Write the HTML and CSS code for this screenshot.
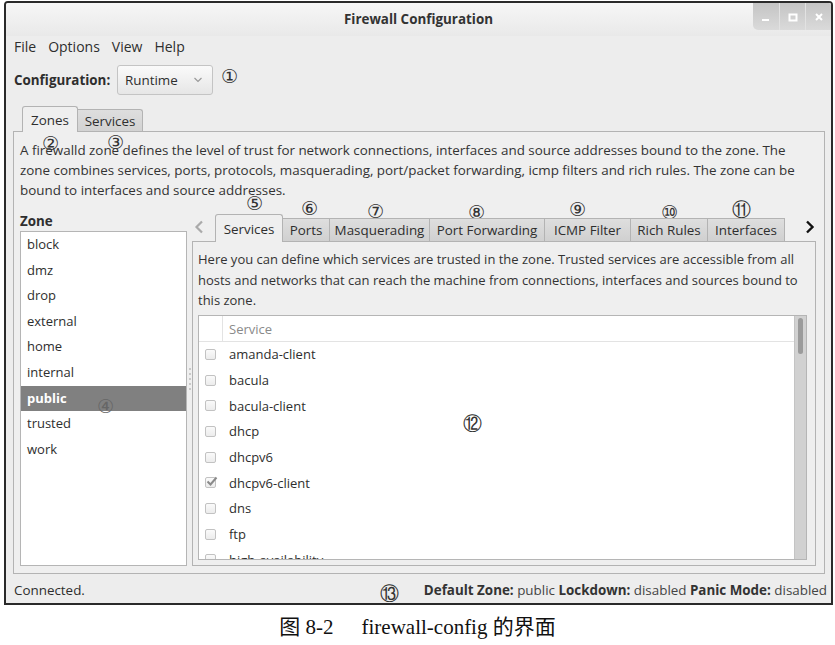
FILE: index.html
```html
<!DOCTYPE html>
<html>
<head>
<meta charset="utf-8">
<link rel="stylesheet" href="styles.css">
</head>
<body>
<div class="window">
  <div class="titlebar">
    <span class="title">Firewall Configuration</span>
    <div class="wbtns">
      <span class="wbtn"><svg width="10" height="10" viewBox="0 0 10 10"><rect x="1" y="7" width="7" height="2" fill="#fff"/></svg></span>
      <span class="wbtn"><svg width="10" height="10" viewBox="0 0 10 10"><rect x="1.5" y="2.5" width="7" height="6" fill="none" stroke="#fff" stroke-width="2"/></svg></span>
      <span class="wbtn"><svg width="10" height="10" viewBox="0 0 10 10"><path d="M2 2 L8 8 M8 2 L2 8" stroke="#fff" stroke-width="2"/></svg></span>
    </div>
  </div>
  <div class="menubar">
    <span>File</span><span>Options</span><span>View</span><span>Help</span>
  </div>
  <div class="configrow">
    <span class="cfglabel">Configuration:</span>
    <div class="combo"><span>Runtime</span><svg width="10" height="8" viewBox="0 0 10 8"><path d="M1.5 2 L5 5.5 L8.5 2" fill="none" stroke="#999" stroke-width="1.2"/></svg></div>
  </div>
  <div class="nb-tabs">
    <span class="tab active">Zones</span><span class="tab">Services</span>
  </div>
  <div class="nb-frame">
    <p class="desc">A firewalld zone defines the level of trust for network connections, interfaces and source addresses bound to the zone. The zone combines services, ports, protocols, masquerading, port/packet forwarding, icmp filters and rich rules. The zone can be bound to interfaces and source addresses.</p>
    <div class="content">
      <div class="zonecol">
        <div class="zonelabel">Zone</div>
        <ul class="zonelist">
          <li>block</li><li>dmz</li><li>drop</li><li>external</li><li>home</li><li>internal</li><li class="sel">public</li><li>trusted</li><li>work</li>
        </ul>
      </div>
      <div class="handle"><i></i><i></i><i></i><i></i><i></i></div>
      <div class="rightcol">
        <div class="subtabs">
          <span class="arrow"><svg width="10" height="14" viewBox="0 0 10 14"><path d="M8 1.5 L2.5 7 L8 12.5" fill="none" stroke="#aaa" stroke-width="2.2"/></svg></span>
          <span class="stab active">Services</span><span class="stab">Ports</span><span class="stab">Masquerading</span><span class="stab">Port Forwarding</span><span class="stab">ICMP Filter</span><span class="stab">Rich Rules</span><span class="stab">Interfaces</span>
          <span class="arrow right"><svg width="10" height="14" viewBox="0 0 10 14"><path d="M2 1.5 L7.5 7 L2 12.5" fill="none" stroke="#111" stroke-width="2.4"/></svg></span>
        </div>
        <div class="panel">
          <p class="pdesc">Here you can define which services are trusted in the zone. Trusted services are accessible from all hosts and networks that can reach the machine from connections, interfaces and sources bound to this zone.</p>
          <div class="tree">
            <div class="treebody">
              <div class="thead"><span class="tcheck"></span><span class="tname">Service</span></div>
              <div class="row"><span class="cb"></span><span>amanda-client</span></div>
              <div class="row"><span class="cb"></span><span>bacula</span></div>
              <div class="row"><span class="cb"></span><span>bacula-client</span></div>
              <div class="row"><span class="cb"></span><span>dhcp</span></div>
              <div class="row"><span class="cb"></span><span>dhcpv6</span></div>
              <div class="row"><span class="cb checked"><svg width="12" height="11" viewBox="0 0 12 11"><path d="M1.5 5.5 L4.5 8.5 L10.5 1.5" fill="none" stroke="#8a8a8a" stroke-width="2"/></svg></span><span>dhcpv6-client</span></div>
              <div class="row"><span class="cb"></span><span>dns</span></div>
              <div class="row"><span class="cb"></span><span>ftp</span></div>
              <div class="row"><span class="cb"></span><span>high-availability</span></div>
            </div>
            <div class="scroll"><div class="thumb"></div></div>
          </div>
        </div>
      </div>
    </div>
  </div>
  <div class="statusbar">
    <span class="conn">Connected.</span>
    <span class="status"><b>Default Zone:</b> public <b>Lockdown:</b> disabled <b>Panic Mode:</b> disabled</span>
  </div>
  <span class="ann" style="left:215px;top:62px">①</span>
  <span class="ann" style="left:36px;top:129px">②</span>
  <span class="ann" style="left:101px;top:128px">③</span>
  <span class="ann a4" style="left:91px;top:392px">④</span>
  <span class="ann" style="left:240px;top:189px">⑤</span>
  <span class="ann" style="left:295px;top:194px">⑥</span>
  <span class="ann" style="left:361px;top:197px">⑦</span>
  <span class="ann" style="left:462px;top:198px">⑧</span>
  <span class="ann" style="left:563px;top:195px">⑨</span>
  <span class="ann" style="left:655px;top:198px">⑩</span>
  <span class="ann" style="left:726px;top:195px">⑪</span>
  <span class="ann" style="left:457px;top:409px">⑫</span>
  <span class="ann" style="left:374px;top:579px">⑬</span>
</div>
<div class="caption"><span>图 8-2</span><span>firewall-config 的界面</span></div>
</body>
</html>
```
FILE: styles.css
```css
* { box-sizing: border-box; }
body {
  margin: 0;
  background: #fff;
  font-family: "Open Sans", "Noto Sans", sans-serif;
  font-size: 13.4px;
  color: #2e2e2e;
}
.window {
  position: relative;
  margin: 1px 2px 0 4px;
  height: 604px;
  border: 2px solid #2a2a2a;
  border-radius: 4px 4px 0 0;
  background: #ededed;
  display: flex;
  flex-direction: column;
  overflow: hidden;
}
.titlebar {
  position: relative;
  height: 33px;
  flex: none;
  background: linear-gradient(#f6f6f6, #e9e9e9);
  display: flex;
  align-items: center;
  justify-content: center;
}
.title { font-weight: bold; color: #333; margin-top: -1px; }
.wbtns {
  position: absolute;
  right: 0;
  top: 0;
  display: flex;
  height: 27px;
  border-radius: 0 0 0 5px;
  overflow: hidden;
  background: linear-gradient(#c4c4c4, #dadada);
}
.wbtn {
  width: 26px;
  display: flex;
  align-items: center;
  justify-content: center;
  border-left: 1px solid #e2e2e2;
}
.wbtn:first-child { border-left: none; }
.menubar {
  height: 21px;
  flex: none;
  display: flex;
  align-items: center;
  gap: 12px;
  padding-left: 8px;
  font-size: 14px;
}
.configrow {
  height: 31px;
  margin-top: 7px;
  flex: none;
  display: flex;
  align-items: center;
  padding-left: 8px;
}
.cfglabel { font-weight: bold; width: 103px; }
.combo {
  width: 96px;
  height: 30px;
  border: 1px solid #c4c4c4;
  border-radius: 3px;
  background: linear-gradient(#fafafa, #e6e6e6);
  display: flex;
  align-items: center;
  justify-content: space-between;
  padding: 0 9px 0 7px;
}
.nb-tabs {
  margin-top: 9px;
  height: 27px;
  flex: none;
  display: flex;
  align-items: flex-end;
  padding-left: 16px;
  position: relative;
  z-index: 1;
}
.tab {
  height: 22px;
  width: 65px;
  border: 1px solid #b3b3b3;
  border-bottom: none;
  border-left: none;
  border-radius: 0 3px 0 0;
  background: linear-gradient(#dedede, #d2d2d2);
  display: flex;
  align-items: center;
  justify-content: center;
}
.tab.active {
  height: 26px;
  width: 56px;
  margin-bottom: -1px;
  background: #efefef;
  border-left: 1px solid #b3b3b3;
  border-radius: 3px 3px 0 0;
}
.nb-frame {
  margin: 0 6px 0 7px;
  height: 443px;
  flex: none;
  border: 1px solid #b3b3b3;
  background: #efefef;
  padding: 8px 6px 7px 6px;
  display: flex;
  flex-direction: column;
  overflow: hidden;
}
.desc {
  margin: 0;
  line-height: 20px;
  color: #333;
}
.content {
  margin-top: 11px;
  display: flex;
  flex: 1;
  min-height: 0;
}
.zonecol {
  width: 167px;
  display: flex;
  flex-direction: column;
  min-height: 0;
}
.zonelabel {
  font-weight: bold;
  height: 20px;
  line-height: 20px;
}
.zonelist {
  list-style: none;
  margin: 0;
  padding: 0;
  flex: 1;
  min-height: 0;
  background: #fff;
  border: 1px solid #b5b5b5;
  font-size: 13px;
}
.zonelist li {
  height: 25.6px;
  line-height: 25.6px;
  padding-left: 6px;
}
.zonelist li.sel {
  background: #808080;
  color: #fff;
  font-weight: bold;
}
.handle {
  width: 5px;
  display: flex;
  flex-direction: column;
  align-items: center;
  justify-content: center;
  gap: 3px;
  padding-bottom: 20px;
}
.handle i {
  width: 2px;
  height: 2px;
  background: #c8c8c8;
  display: block;
}
.rightcol {
  flex: 1;
  display: flex;
  flex-direction: column;
  margin-top: 3px;
  margin-right: 2px;
  min-height: 0;
}
.subtabs {
  height: 27px;
  flex: none;
  display: flex;
  align-items: flex-end;
  position: relative;
  z-index: 1;
}
.arrow {
  width: 23px;
  height: 27px;
  display: flex;
  align-items: center;
  padding-left: 2px;
  padding-bottom: 2px;
}
.arrow.right {
  flex: 1;
  justify-content: flex-end;
  padding-right: 1px;
}
.stab {
  height: 23px;
  border: 1px solid #b3b3b3;
  border-bottom: none;
  border-left: none;
  background: linear-gradient(#dedede, #d0d0d0);
  display: flex;
  align-items: center;
  justify-content: center;
  white-space: nowrap;
}
.stab:nth-child(2) { width: 68px; }
.stab:nth-child(3) { width: 47px; }
.stab:nth-child(4) { width: 100px; }
.stab:nth-child(5) { width: 115px; }
.stab:nth-child(6) { width: 86px; }
.stab:nth-child(7) { width: 77px; }
.stab:nth-child(8) { width: 77px; }
.stab.active {
  height: 28px;
  margin-bottom: -1px;
  background: #efefef;
  border-left: 1px solid #b3b3b3;
  border-radius: 3px 3px 0 0;
}
.panel {
  flex: 1;
  min-height: 0;
  border: 1px solid #b3b3b3;
  background: #efefef;
  padding: 7px 8px 5px 5px;
  display: flex;
  flex-direction: column;
}
.pdesc {
  margin: 0;
  line-height: 20.5px;
  font-size: 13px;
  color: #333;
}
.tree {
  margin-top: 4px;
  flex: 1;
  min-height: 0;
  border: 1px solid #b5b5b5;
  background: #fff;
  display: flex;
  overflow: hidden;
}
.treebody {
  flex: 1;
  overflow: hidden;
  font-size: 13px;
}
.thead {
  height: 26px;
  display: flex;
  border-bottom: 1px solid #e3e3e3;
}
.tcheck {
  width: 24px;
  border-right: 1px solid #e3e3e3;
}
.tname {
  padding-left: 6px;
  line-height: 26px;
  color: #8a8a8a;
}
.row {
  height: 25.7px;
  display: flex;
  align-items: center;
}
.cb {
  width: 11px;
  height: 11px;
  margin: 0 13px 0 6px;
  border: 1px solid #c2c2c2;
  border-radius: 2px;
  background: linear-gradient(#fafafa, #ececec);
  position: relative;
}
.cb.checked svg { position: absolute; left: 0; top: -2px; }
.scroll {
  width: 12px;
  background: #d1d1d1;
  border-left: 1px solid #c4c4c4;
  padding: 2px 3px;
}
.thumb {
  height: 36px;
  background: #9b9b9b;
  border-radius: 3px;
}
.statusbar {
  flex: 1;
  display: flex;
  justify-content: space-between;
  align-items: center;
  padding: 2px 4px 0 8px;
}
.status { color: #444; }
.status b { color: #333; }
.ann {
  position: absolute;
  font-family: "DejaVu Sans", sans-serif;
  font-size: 19px;
  line-height: 22px;
  color: #333;
}
.ann.a4 { color: #666; }
.caption {
  display: flex;
  justify-content: center;
  gap: 28px;
  margin-top: 9px;
  font-family: "Liberation Serif", "Noto Sans CJK SC", serif;
  font-size: 21px;
  line-height: 26px;
  color: #111;
}
```
